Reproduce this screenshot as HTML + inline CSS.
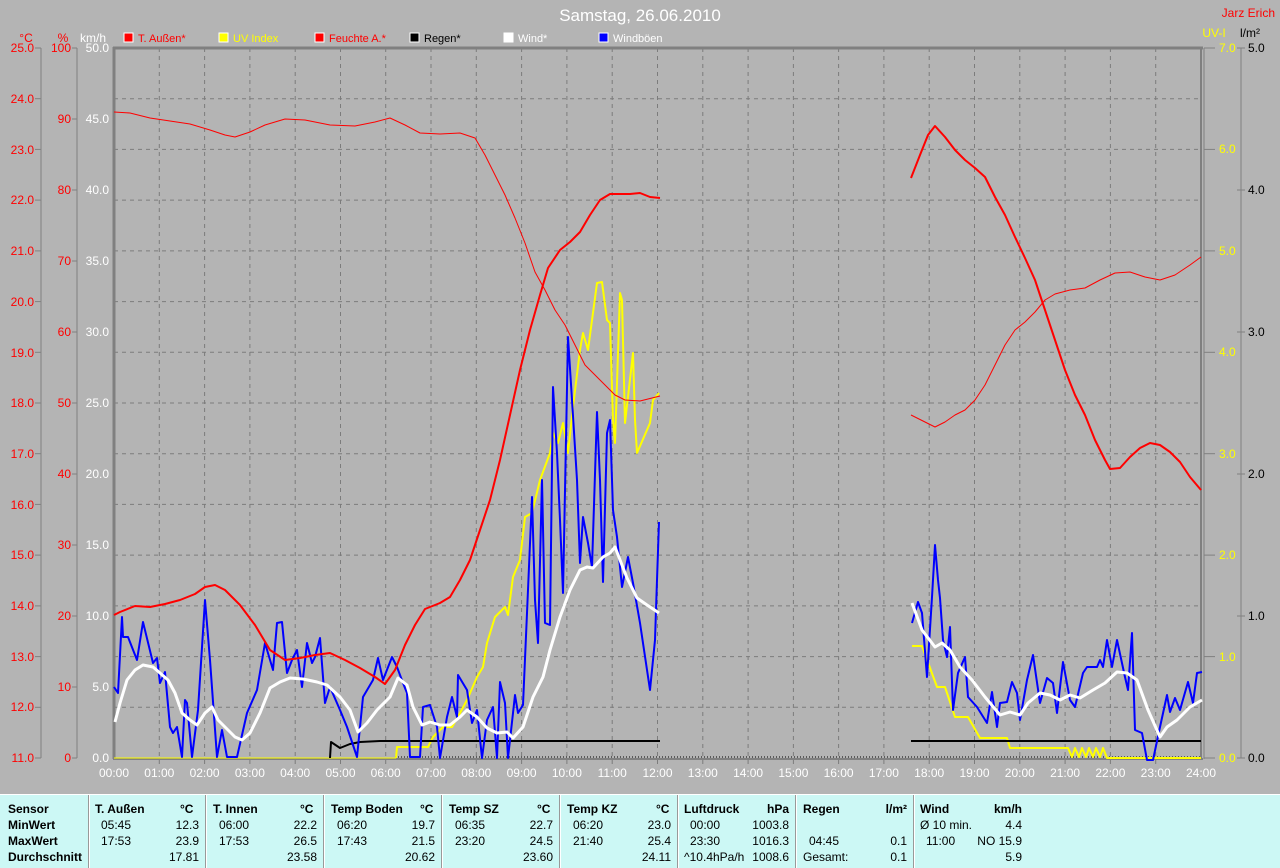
<!DOCTYPE html>
<html><head><meta charset="utf-8"><style>
body{margin:0;width:1280px;height:867px;background:#b4b4b4;overflow:hidden;font-family:"Liberation Sans",sans-serif;position:relative}
svg{position:absolute;left:0;top:0}
.tb{position:absolute;left:0;top:794px;width:1280px;height:73px;background:#ccf8f5;border-top:1px solid #fff}
.c{position:absolute;font-size:12px;color:#000;white-space:nowrap}
.b{font-weight:bold}
.d{position:absolute;top:0;height:73px;width:1px;background:#999;border-right:1px solid #fff}
</style></head><body>
<svg width="1280" height="794" font-family="Liberation Sans, sans-serif" font-size="12">
<g stroke="#7c7c7c" stroke-dasharray="4,4" stroke-width="1">
<line x1="114" y1="98.7" x2="1201" y2="98.7"/><line x1="114" y1="149.4" x2="1201" y2="149.4"/><line x1="114" y1="200.1" x2="1201" y2="200.1"/><line x1="114" y1="250.9" x2="1201" y2="250.9"/><line x1="114" y1="301.6" x2="1201" y2="301.6"/><line x1="114" y1="352.3" x2="1201" y2="352.3"/><line x1="114" y1="403" x2="1201" y2="403"/><line x1="114" y1="453.7" x2="1201" y2="453.7"/><line x1="114" y1="504.4" x2="1201" y2="504.4"/><line x1="114" y1="555.1" x2="1201" y2="555.1"/><line x1="114" y1="605.9" x2="1201" y2="605.9"/><line x1="114" y1="656.6" x2="1201" y2="656.6"/><line x1="114" y1="707.3" x2="1201" y2="707.3"/>
<line x1="159.3" y1="48" x2="159.3" y2="764"/><line x1="204.6" y1="48" x2="204.6" y2="764"/><line x1="249.9" y1="48" x2="249.9" y2="764"/><line x1="295.2" y1="48" x2="295.2" y2="764"/><line x1="340.5" y1="48" x2="340.5" y2="764"/><line x1="385.7" y1="48" x2="385.7" y2="764"/><line x1="431" y1="48" x2="431" y2="764"/><line x1="476.3" y1="48" x2="476.3" y2="764"/><line x1="521.6" y1="48" x2="521.6" y2="764"/><line x1="566.9" y1="48" x2="566.9" y2="764"/><line x1="612.2" y1="48" x2="612.2" y2="764"/><line x1="657.5" y1="48" x2="657.5" y2="764"/><line x1="702.8" y1="48" x2="702.8" y2="764"/><line x1="748.1" y1="48" x2="748.1" y2="764"/><line x1="793.4" y1="48" x2="793.4" y2="764"/><line x1="838.6" y1="48" x2="838.6" y2="764"/><line x1="883.9" y1="48" x2="883.9" y2="764"/><line x1="929.2" y1="48" x2="929.2" y2="764"/><line x1="974.5" y1="48" x2="974.5" y2="764"/><line x1="1019.8" y1="48" x2="1019.8" y2="764"/><line x1="1065.1" y1="48" x2="1065.1" y2="764"/><line x1="1110.4" y1="48" x2="1110.4" y2="764"/><line x1="1155.7" y1="48" x2="1155.7" y2="764"/>
</g>
<g stroke="#808080" fill="none">
<line x1="114" y1="47" x2="114" y2="759" stroke-width="3"/>
<line x1="113" y1="48" x2="1203" y2="48" stroke-width="3"/>
<line x1="113" y1="759" x2="1203" y2="759" stroke-width="2"/>
<line x1="1201" y1="48" x2="1201" y2="759" stroke-width="2"/>
<line x1="1204" y1="48" x2="1204" y2="759" stroke-width="1"/>
<line x1="41" y1="48" x2="41" y2="758"/><line x1="77" y1="48" x2="77" y2="758"/><line x1="1241" y1="48" x2="1241" y2="758"/>
</g>
<g stroke="#808080">
<line x1="35" y1="48" x2="41" y2="48"/><line x1="35" y1="98.7" x2="41" y2="98.7"/><line x1="35" y1="149.4" x2="41" y2="149.4"/><line x1="35" y1="200.1" x2="41" y2="200.1"/><line x1="35" y1="250.9" x2="41" y2="250.9"/><line x1="35" y1="301.6" x2="41" y2="301.6"/><line x1="35" y1="352.3" x2="41" y2="352.3"/><line x1="35" y1="403" x2="41" y2="403"/><line x1="35" y1="453.7" x2="41" y2="453.7"/><line x1="35" y1="504.4" x2="41" y2="504.4"/><line x1="35" y1="555.1" x2="41" y2="555.1"/><line x1="35" y1="605.9" x2="41" y2="605.9"/><line x1="35" y1="656.6" x2="41" y2="656.6"/><line x1="35" y1="707.3" x2="41" y2="707.3"/><line x1="35" y1="758" x2="41" y2="758"/>
<line x1="72" y1="48" x2="77" y2="48"/><line x1="72" y1="119" x2="77" y2="119"/><line x1="72" y1="190" x2="77" y2="190"/><line x1="72" y1="261" x2="77" y2="261"/><line x1="72" y1="332" x2="77" y2="332"/><line x1="72" y1="403" x2="77" y2="403"/><line x1="72" y1="474" x2="77" y2="474"/><line x1="72" y1="545" x2="77" y2="545"/><line x1="72" y1="616" x2="77" y2="616"/><line x1="72" y1="687" x2="77" y2="687"/><line x1="72" y1="758" x2="77" y2="758"/>
<line x1="1204" y1="48" x2="1215" y2="48"/><line x1="1204" y1="149.4" x2="1215" y2="149.4"/><line x1="1204" y1="250.9" x2="1215" y2="250.9"/><line x1="1204" y1="352.3" x2="1215" y2="352.3"/><line x1="1204" y1="453.7" x2="1215" y2="453.7"/><line x1="1204" y1="555.1" x2="1215" y2="555.1"/><line x1="1204" y1="656.6" x2="1215" y2="656.6"/><line x1="1204" y1="758" x2="1215" y2="758"/>
<line x1="1237" y1="48" x2="1245" y2="48"/><line x1="1237" y1="190" x2="1245" y2="190"/><line x1="1237" y1="332" x2="1245" y2="332"/><line x1="1237" y1="474" x2="1245" y2="474"/><line x1="1237" y1="616" x2="1245" y2="616"/><line x1="1237" y1="758" x2="1245" y2="758"/>
</g>
<text x="640" y="21" fill="#fff" font-size="17" text-anchor="middle">Samstag, 26.06.2010</text>
<text x="1275" y="17" fill="#f00" text-anchor="end">Jarz Erich</text>
<text x="26" y="47" fill="#f00" text-anchor="middle" dy="-5">°C</text>
<text x="63" y="42" fill="#f00" text-anchor="middle">%</text>
<text x="93" y="42" fill="#fff" text-anchor="middle">km/h</text>
<text x="1214" y="37" fill="#ff0" text-anchor="middle">UV-I</text>
<text x="1250" y="37" fill="#000" text-anchor="middle">l/m²</text>
<g fill="#f00" text-anchor="end">
<text x="34" y="52">25.0</text><text x="34" y="103">24.0</text><text x="34" y="154">23.0</text><text x="34" y="204">22.0</text><text x="34" y="255">21.0</text><text x="34" y="306">20.0</text><text x="34" y="357">19.0</text><text x="34" y="407">18.0</text><text x="34" y="458">17.0</text><text x="34" y="509">16.0</text><text x="34" y="559">15.0</text><text x="34" y="610">14.0</text><text x="34" y="661">13.0</text><text x="34" y="711">12.0</text><text x="34" y="762">11.0</text>
<text x="71" y="52">100</text><text x="71" y="123">90</text><text x="71" y="194">80</text><text x="71" y="265">70</text><text x="71" y="336">60</text><text x="71" y="407">50</text><text x="71" y="478">40</text><text x="71" y="549">30</text><text x="71" y="620">20</text><text x="71" y="691">10</text><text x="71" y="762">0</text>
</g>
<g fill="#fff" text-anchor="end">
<text x="109" y="52">50.0</text><text x="109" y="123">45.0</text><text x="109" y="194">40.0</text><text x="109" y="265">35.0</text><text x="109" y="336">30.0</text><text x="109" y="407">25.0</text><text x="109" y="478">20.0</text><text x="109" y="549">15.0</text><text x="109" y="620">10.0</text><text x="109" y="691">5.0</text><text x="109" y="762">0.0</text>
</g>
<g fill="#ff0">
<text x="1219" y="52">7.0</text><text x="1219" y="153">6.0</text><text x="1219" y="255">5.0</text><text x="1219" y="356">4.0</text><text x="1219" y="458">3.0</text><text x="1219" y="559">2.0</text><text x="1219" y="661">1.0</text><text x="1219" y="762">0.0</text>
</g>
<g fill="#000">
<text x="1248" y="52">5.0</text><text x="1248" y="194">4.0</text><text x="1248" y="336">3.0</text><text x="1248" y="478">2.0</text><text x="1248" y="620">1.0</text><text x="1248" y="762">0.0</text>
</g>
<g fill="#fff" text-anchor="middle">
<text x="114" y="777">00:00</text><text x="159.3" y="777">01:00</text><text x="204.6" y="777">02:00</text><text x="249.9" y="777">03:00</text><text x="295.2" y="777">04:00</text><text x="340.5" y="777">05:00</text><text x="385.7" y="777">06:00</text><text x="431" y="777">07:00</text><text x="476.3" y="777">08:00</text><text x="521.6" y="777">09:00</text><text x="566.9" y="777">10:00</text><text x="612.2" y="777">11:00</text><text x="657.5" y="777">12:00</text><text x="702.8" y="777">13:00</text><text x="748.1" y="777">14:00</text><text x="793.4" y="777">15:00</text><text x="838.6" y="777">16:00</text><text x="883.9" y="777">17:00</text><text x="929.2" y="777">18:00</text><text x="974.5" y="777">19:00</text><text x="1019.8" y="777">20:00</text><text x="1065.1" y="777">21:00</text><text x="1110.4" y="777">22:00</text><text x="1155.7" y="777">23:00</text><text x="1201" y="777">24:00</text>
</g>
<g font-size="11">
<rect x="124" y="33" width="9" height="9" fill="#f00" stroke="#fff"/><text x="138" y="42" fill="#f00">T. Außen*</text>
<rect x="219" y="33" width="9" height="9" fill="#ff0" stroke="#fff"/><text x="233" y="42" fill="#ff0">UV Index</text>
<rect x="315" y="33" width="9" height="9" fill="#f00" stroke="#fff"/><text x="329" y="42" fill="#f00">Feuchte A.*</text>
<rect x="410" y="33" width="9" height="9" fill="#000" stroke="#fff"/><text x="424" y="42" fill="#000">Regen*</text>
<rect x="504" y="33" width="9" height="9" fill="#fff" stroke="#fff"/><text x="518" y="42" fill="#fff">Wind*</text>
<rect x="599" y="33" width="9" height="9" fill="#00f" stroke="#fff"/><text x="613" y="42" fill="#fff">Windböen</text>
</g>
<line x1="395" y1="757" x2="1201" y2="757" stroke="#000" stroke-dasharray="1,2"/>
<g fill="none" stroke-linejoin="round">
<polyline stroke="#ff0" stroke-width="1" points="114,758 396,758"/>
<polyline stroke="#ff0" stroke-width="2" points="396,758 397,747 428,747 433,737 443,727 452,727 460,713 467,700 477,677 483,667 487,643 495,617 505,607 508,615 513,577 520,560 525,517 532,513 540,480 550,453 553,433 558,443 563,423 568,453 573,407 580,350 583,333 588,350 597,283 602,282 607,320 610,323 613,420 615,443 620,293 622,300 625,423 633,353 635,420 637,453 650,423 653,400 659,393"/>
<polyline stroke="#ff0" stroke-width="2" points="912,646 922,646 937,687 945,687 955,717 968,717 980,738 1007,738 1010,748 1068,748 1072,757 1075,748 1079,757 1082,748 1086,757 1089,748 1093,757 1096,748 1100,757 1103,748 1107,758 1201,758"/>
<polyline stroke="#000" stroke-width="2" points="330,758 331,742 340,748 350,744 360,742 380,741 400,741 660,741"/>
<polyline stroke="#000" stroke-width="2" points="911,741 1201,741"/>
<polyline stroke="#f00" stroke-width="1" points="114,112 130,113 150,118 170,121 190,124 210,130 225,135 235,137 250,132 265,125 285,119 305,120 330,125 355,126 375,122 390,118 405,125 420,133 440,134 460,133 475,138 485,155 495,175 505,195 515,218 525,243 535,272 545,290 555,310 565,325 575,345 585,365 595,375 605,385 615,395 625,400 640,401 660,396"/>
<polyline stroke="#f00" stroke-width="1" points="911,415 925,422 935,427 945,422 955,415 965,410 975,400 985,385 995,365 1005,345 1015,330 1025,322 1035,312 1045,300 1055,294 1070,290 1085,288 1100,280 1115,273 1130,272 1145,277 1160,280 1175,275 1190,265 1201,257"/>
<polyline stroke="#00f" stroke-width="2" points="114,687 118,693 122,617 123,637 128,637 137,660 143,622 153,663 157,658 160,683 165,672 170,727 173,733 177,727 182,757 185,700 187,703 192,757 198,710 205,600 210,660 217,757 222,730 227,757 237,757 247,713 257,690 265,643 273,670 277,623 282,622 287,673 292,660 297,650 302,687 307,643 312,663 315,657 320,638 325,703 330,687 340,710 347,727 357,757 363,697 373,680 378,658 383,680 392,657 397,667 403,683 407,693 410,757 420,757 423,707 430,705 437,727 440,758 447,717 452,697 457,717 458,675 467,690 472,723 477,710 482,758 487,720 493,707 497,758 500,682 505,703 508,758 515,695 518,713 523,705 527,613 532,497 535,600 538,643 542,480 545,623 550,625 553,387 557,453 560,520 563,593 568,337 572,400 577,480 580,563 583,517 588,543 592,567 597,412 600,480 603,582 607,433 610,420 613,510 617,537 622,587 628,557 633,583 640,623 650,690 655,640 657,580 659,522"/>
<polyline stroke="#00f" stroke-width="2" points="912,623 918,602 922,613 927,677 932,597 935,545 938,580 940,598 943,640 947,657 950,627 953,710 958,673 965,657 968,697 977,707 987,723 992,692 997,727 1000,703 1007,702 1012,682 1017,693 1020,720 1027,680 1033,655 1040,703 1047,678 1053,683 1057,713 1063,662 1070,700 1075,707 1083,673 1087,667 1097,667 1100,660 1103,667 1107,640 1112,667 1117,640 1125,677 1128,690 1132,633 1135,730 1142,733 1147,760 1153,760 1160,727 1167,695 1170,712 1175,698 1180,710 1188,682 1193,703 1197,673 1202,672"/>
<polyline stroke="#fff" stroke-width="3" points="115,722 120,703 127,680 135,670 143,665 153,667 160,673 168,680 175,693 182,713 190,720 197,725 205,713 212,707 218,720 225,727 235,737 242,740 250,733 260,713 270,688 280,682 290,678 303,679 317,682 327,685 340,697 350,710 358,732 367,723 377,710 390,697 398,678 407,685 413,707 422,725 430,722 440,725 450,725 460,717 467,710 477,717 487,728 497,733 507,732 513,738 523,727 533,697 543,677 550,650 560,617 570,590 580,570 587,567 593,568 603,557 610,553 615,547 627,578 637,598 647,605 659,613"/>
<polyline stroke="#fff" stroke-width="3" points="912,603 922,630 935,647 942,643 950,650 960,667 972,680 985,697 1000,715 1010,712 1020,715 1028,703 1040,693 1050,695 1060,700 1070,695 1080,698 1093,690 1105,683 1117,672 1127,673 1137,680 1148,710 1160,737 1167,727 1177,720 1190,707 1202,700"/>
<polyline stroke="#f00" stroke-width="2" points="114,615 120,612 135,606 150,607 165,604 180,600 195,594 205,587 215,585 225,590 240,605 255,625 270,650 285,660 300,658 315,655 330,653 345,660 360,668 375,677 385,684 395,670 405,645 415,625 425,609 440,603 450,597 460,580 470,560 480,530 490,500 500,460 510,415 520,370 530,330 540,295 548,268 560,250 570,242 580,232 590,215 600,200 610,194 620,194 630,194 640,193 650,197 660,198"/>
<polyline stroke="#f00" stroke-width="2" points="911,178 920,155 928,135 935,126 945,137 955,150 965,160 975,168 985,177 995,197 1005,215 1015,237 1025,258 1035,280 1045,310 1055,340 1065,370 1075,395 1085,415 1095,440 1105,460 1110,469 1120,468 1130,457 1140,448 1150,443 1160,445 1170,452 1180,462 1190,477 1201,490"/>
</g>
</svg>
<div class="tb">
<div class="d" style="left:88px"></div><div class="d" style="left:205px"></div><div class="d" style="left:323px"></div><div class="d" style="left:441px"></div><div class="d" style="left:559px"></div><div class="d" style="left:677px"></div><div class="d" style="left:795px"></div><div class="d" style="left:913px"></div>
<div class="c b" style="left:8px;top:7px">Sensor</div><div class="c b" style="left:8px;top:23px">MinWert</div><div class="c b" style="left:8px;top:39px">MaxWert</div><div class="c b" style="left:8px;top:55px">Durchschnitt</div>

<div class="c b" style="left:95px;top:7px">T. Außen</div><div class="c b" style="left:180px;top:7px">°C</div>
<div class="c" style="left:101px;top:23px">05:45</div><div class="c" style="right:1081px;top:23px">12.3</div>
<div class="c" style="left:101px;top:39px">17:53</div><div class="c" style="right:1081px;top:39px">23.9</div>
<div class="c" style="right:1081px;top:55px">17.81</div>

<div class="c b" style="left:213px;top:7px">T. Innen</div><div class="c b" style="left:300px;top:7px">°C</div>
<div class="c" style="left:219px;top:23px">06:00</div><div class="c" style="right:963px;top:23px">22.2</div>
<div class="c" style="left:219px;top:39px">17:53</div><div class="c" style="right:963px;top:39px">26.5</div>
<div class="c" style="right:963px;top:55px">23.58</div>

<div class="c b" style="left:331px;top:7px">Temp Boden</div><div class="c b" style="left:420px;top:7px">°C</div>
<div class="c" style="left:337px;top:23px">06:20</div><div class="c" style="right:845px;top:23px">19.7</div>
<div class="c" style="left:337px;top:39px">17:43</div><div class="c" style="right:845px;top:39px">21.5</div>
<div class="c" style="right:845px;top:55px">20.62</div>

<div class="c b" style="left:449px;top:7px">Temp SZ</div><div class="c b" style="left:537px;top:7px">°C</div>
<div class="c" style="left:455px;top:23px">06:35</div><div class="c" style="right:727px;top:23px">22.7</div>
<div class="c" style="left:455px;top:39px">23:20</div><div class="c" style="right:727px;top:39px">24.5</div>
<div class="c" style="right:727px;top:55px">23.60</div>

<div class="c b" style="left:567px;top:7px">Temp KZ</div><div class="c b" style="left:656px;top:7px">°C</div>
<div class="c" style="left:573px;top:23px">06:20</div><div class="c" style="right:609px;top:23px">23.0</div>
<div class="c" style="left:573px;top:39px">21:40</div><div class="c" style="right:609px;top:39px">25.4</div>
<div class="c" style="right:609px;top:55px">24.11</div>

<div class="c b" style="left:684px;top:7px">Luftdruck</div><div class="c b" style="right:491px;top:7px">hPa</div>
<div class="c" style="left:690px;top:23px">00:00</div><div class="c" style="right:491px;top:23px">1003.8</div>
<div class="c" style="left:690px;top:39px">23:30</div><div class="c" style="right:491px;top:39px">1016.3</div>
<div class="c" style="left:684px;top:55px">^10.4hPa/h</div><div class="c" style="right:491px;top:55px">1008.6</div>

<div class="c b" style="left:803px;top:7px">Regen</div><div class="c b" style="right:373px;top:7px">l/m²</div>
<div class="c" style="left:809px;top:39px">04:45</div><div class="c" style="right:373px;top:39px">0.1</div>
<div class="c" style="left:803px;top:55px">Gesamt:</div><div class="c" style="right:373px;top:55px">0.1</div>

<div class="c b" style="left:920px;top:7px">Wind</div><div class="c b" style="right:258px;top:7px">km/h</div>
<div class="c" style="left:920px;top:23px">Ø 10 min.</div><div class="c" style="right:258px;top:23px">4.4</div>
<div class="c" style="left:926px;top:39px">11:00</div><div class="c" style="right:258px;top:39px">NO 15.9</div>
<div class="c" style="right:258px;top:55px">5.9</div>
</div>
</body></html>
